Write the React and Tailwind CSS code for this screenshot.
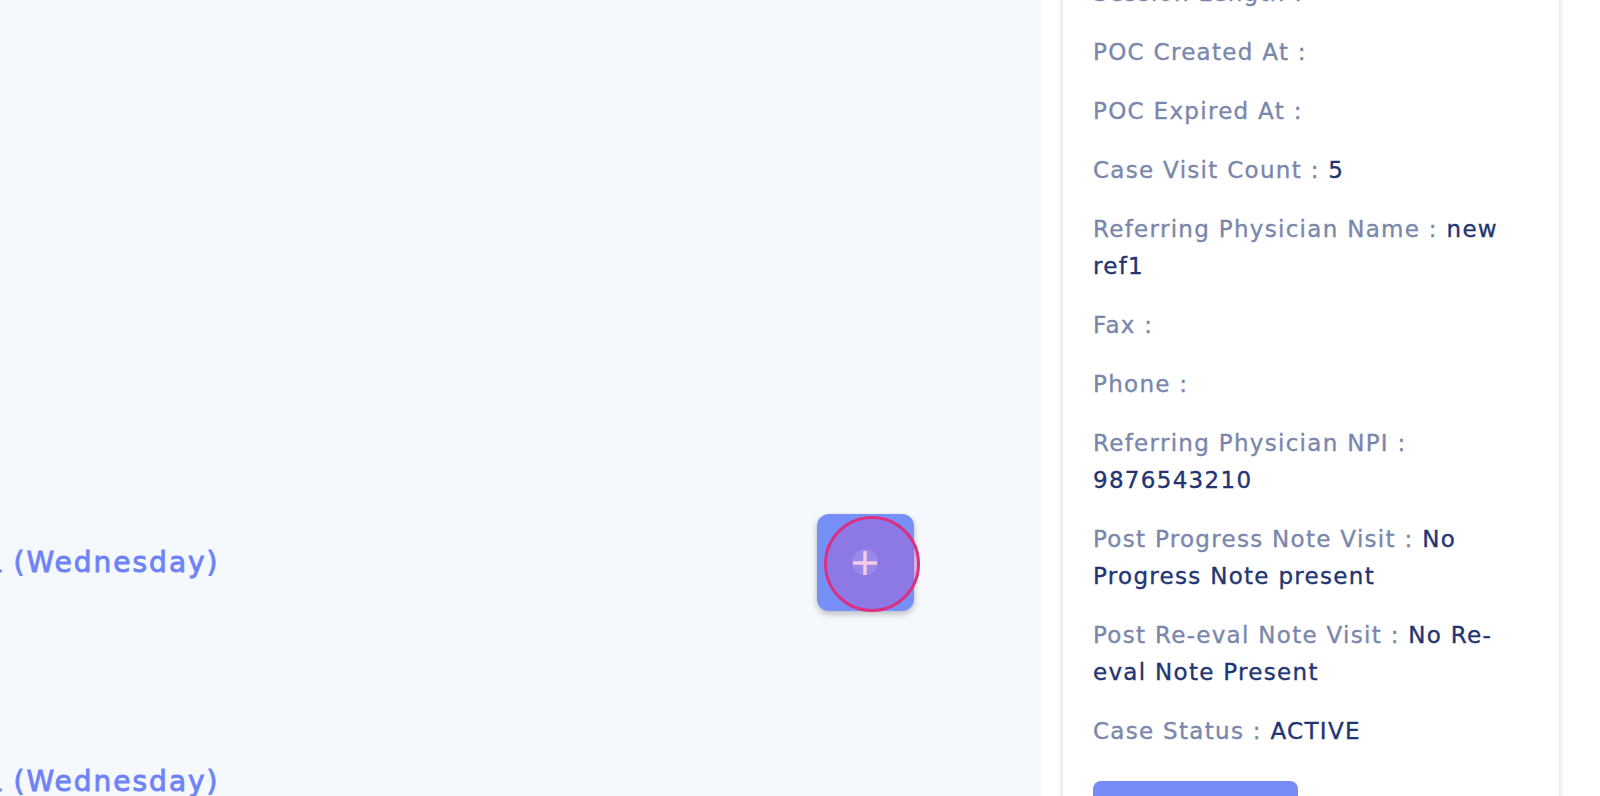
import React from "react";

const items = [
  { label: "Session Length :", value: "" },
  { label: "POC Created At :", value: "" },
  { label: "POC Expired At :", value: "" },
  { label: "Case Visit Count :", value: "5" },
  { label: "Referring Physician Name :", value: "new ref1" },
  { label: "Fax :", value: "" },
  { label: "Phone :", value: "" },
  { label: "Referring Physician NPI :", value: "9876543210" },
  { label: "Post Progress Note Visit :", value: "No Progress Note present" },
  { label: "Post Re-eval Note Visit :", value: "No Re-eval Note Present" },
  { label: "Case Status :", value: "ACTIVE" },
];

function DayLabel() {
  return (
    <div className="-ml-[13px] flex items-baseline whitespace-nowrap text-[28px] text-[#6e83f7] [-webkit-text-stroke:0.9px_#6e83f7]">
      <span style={{ fontFamily: "'Liberation Sans', sans-serif" }}>1</span>
      <span className="ml-[11px] tracking-[2px]">(Wednesday)</span>
    </div>
  );
}

export default function App() {
  return (
    <div
      className="flex h-[796px] w-[1600px] overflow-hidden bg-white"
      style={{ fontFamily: "'DejaVu Sans', sans-serif" }}
    >
      {/* left area */}
      <div className="flex w-[1041px] shrink-0 flex-col overflow-hidden bg-[#f5f8fd]">
        <div className="mt-[514px] flex h-[97px] items-center">
          <div className="w-[817px] shrink-0">
            <DayLabel />
          </div>
          <div className="relative h-[97px] w-[97px] rounded-[12px] bg-[#7790f8] shadow-[0_3px_6px_rgba(0,0,0,0.25)]">
            <div className="absolute left-[7px] top-[2px] h-[96px] w-[96px] rounded-full border-[3px] border-[#dc2f82] bg-[rgba(190,70,190,0.3)]" />
            <div className="absolute left-[35px] top-[35px] h-[26px] w-[26px] rounded-full bg-[rgba(255,255,255,0.12)]" />
            <svg
              className="absolute left-[33px] top-[34px]"
              width="30"
              height="30"
              viewBox="0 0 30 30"
            >
              <path d="M15 3v24M3 15h24" stroke="#f6cbe8" strokeWidth="3.5" />
            </svg>
          </div>
        </div>
        <div className="mt-[152px] flex h-[37px] items-center">
          <DayLabel />
        </div>
      </div>

      {/* right panel */}
      <div className="flex flex-1 flex-col overflow-hidden bg-white pl-[22px] pr-[41px]">
        <div className="-mt-[38px] rounded-[6px] bg-white px-[30px] pt-[13px] pb-[40px] shadow-[0_0_6px_rgba(0,0,0,0.18)]">
          <div className="flex flex-col gap-[22px]">
            {items.map((it) => (
              <div
                key={it.label}
                className="text-[23px] leading-[37px] tracking-[1.3px] text-[#7a87ac] [-webkit-text-stroke:0.35px_currentColor]"
              >
                {it.label}
                {it.value && (
                  <>
                    {" "}
                    <span className="text-[#223572]">{it.value}</span>
                  </>
                )}
              </div>
            ))}
          </div>
          <div className="mt-[31px] h-[56px] w-[205px] rounded-[8px] bg-[#778bf8]" />
        </div>
      </div>
    </div>
  );
}
